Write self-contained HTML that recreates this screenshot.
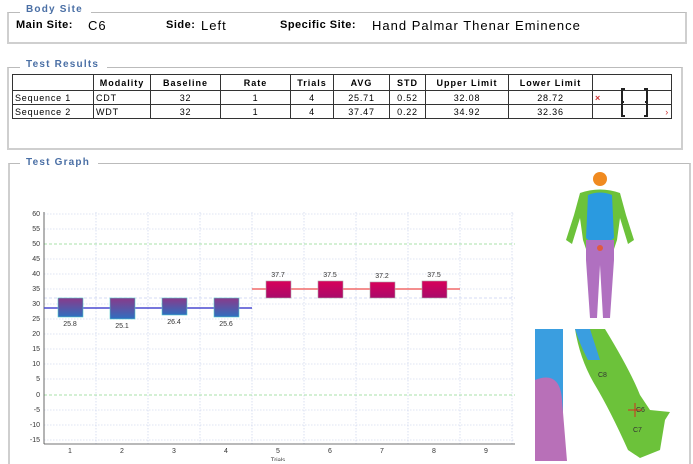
<!DOCTYPE html>
<html><head><style>
body{margin:0;width:693px;height:461px;background:#fff;font-family:"Liberation Sans",sans-serif;position:relative;overflow:hidden}
.box{position:absolute;border:2px solid #cfcfcf;border-top:1px solid #bbb}
.ttl{position:absolute;background:#fff;color:#4a6fa5;font-weight:bold;font-size:10px;letter-spacing:1.2px;padding:0 8px 0 6px}
.lbl{position:absolute;font-size:11px;font-weight:bold;letter-spacing:.5px}
.val{position:absolute;font-size:13px;letter-spacing:1px}
table{position:absolute;left:12px;top:74px;border-collapse:collapse;font-size:9px}
td{border:1px solid #333;height:13px;padding:0 2px;text-align:center;letter-spacing:.8px}
th{border:1px solid #333;height:13px;font-size:9px;letter-spacing:1px}
</style></head><body>
<div class="box" style="left:7px;top:12px;width:676px;height:29px"></div>
<div class="ttl" style="left:20px;top:4px">Body Site</div>
<div class="lbl" style="left:16px;top:19px">Main Site:</div><div class="val" style="left:88px;top:18px">C6</div>
<div class="lbl" style="left:166px;top:19px">Side:</div><div class="val" style="left:201px;top:18px">Left</div>
<div class="lbl" style="left:280px;top:19px">Specific Site:</div><div class="val" style="left:372px;top:18px">Hand Palmar Thenar Eminence</div>

<div class="box" style="left:7px;top:67px;width:672px;height:80px"></div>
<div class="ttl" style="left:20px;top:59px">Test Results</div>
<table>
<tr><th style="width:78px"></th><th style="width:54px">Modality</th><th style="width:67px">Baseline</th><th style="width:67px">Rate</th><th style="width:40px">Trials</th><th style="width:53px">AVG</th><th style="width:33px">STD</th><th style="width:80px">Upper Limit</th><th style="width:81px">Lower Limit</th><th style="width:76px"></th></tr>
<tr><td style="text-align:left">Sequence 1</td><td style="text-align:left">CDT</td><td>32</td><td>1</td><td>4</td><td>25.71</td><td>0.52</td><td>32.08</td><td>28.72</td><td style="text-align:left;color:#c33;font-weight:bold">×</td></tr>
<tr><td style="text-align:left">Sequence 2</td><td style="text-align:left">WDT</td><td>32</td><td>1</td><td>4</td><td>37.47</td><td>0.22</td><td>34.92</td><td>32.36</td><td style="text-align:right;color:#c33">›</td></tr>
</table>
<svg style="position:absolute;left:620px;top:88px" width="30" height="30"><path d="M5 1H2V28H5M24 1H27V28H24M2 14H4M27 14H25" stroke="#222" stroke-width="2" fill="none"/></svg>

<div style="position:absolute;left:8px;top:163px;width:679px;height:300px;border-left:2px solid #cfcfcf;border-top:1px solid #bbb;border-right:2px solid #cfcfcf"></div>
<div class="ttl" style="left:20px;top:157px">Test Graph</div>

<svg style="position:absolute;left:0;top:0" width="693" height="461" font-family="Liberation Sans" font-size="7" fill="#333">
<defs>
<linearGradient id="bl" x1="0" y1="0" x2="0" y2="1"><stop offset="0" stop-color="#8a3a8a"/><stop offset="1" stop-color="#2e6fc0"/></linearGradient>
<linearGradient id="rd" x1="0" y1="0" x2="0" y2="1"><stop offset="0" stop-color="#d8005a"/><stop offset="1" stop-color="#a80a6a"/></linearGradient>
</defs>
<g stroke="#c0cbe8" stroke-width=".6" stroke-dasharray="1.5,1.5">
<line x1="44" y1="214" x2="515" y2="214"/><line x1="44" y1="229" x2="515" y2="229"/><line x1="44" y1="259" x2="515" y2="259"/><line x1="44" y1="274" x2="515" y2="274"/><line x1="44" y1="289" x2="515" y2="289"/><line x1="44" y1="304" x2="515" y2="304"/><line x1="44" y1="319" x2="515" y2="319"/><line x1="44" y1="334" x2="515" y2="334"/><line x1="44" y1="349" x2="515" y2="349"/><line x1="44" y1="364" x2="515" y2="364"/><line x1="44" y1="379" x2="515" y2="379"/><line x1="44" y1="410" x2="515" y2="410"/><line x1="44" y1="425" x2="515" y2="425"/><line x1="44" y1="440" x2="515" y2="440"/>
<line x1="96" y1="212" x2="96" y2="444"/><line x1="148" y1="212" x2="148" y2="444"/><line x1="200" y1="212" x2="200" y2="444"/><line x1="252" y1="212" x2="252" y2="444"/><line x1="304" y1="212" x2="304" y2="444"/><line x1="356" y1="212" x2="356" y2="444"/><line x1="408" y1="212" x2="408" y2="444"/><line x1="460" y1="212" x2="460" y2="444"/><line x1="512" y1="212" x2="512" y2="444"/>
<line x1="44" y1="298" x2="515" y2="298" stroke="#aab8ee" stroke-dasharray="3,2"/>
</g>
<g stroke="#8fd88f" stroke-width=".8" stroke-dasharray="3,2"><line x1="44" y1="244" x2="515" y2="244"/><line x1="44" y1="395" x2="515" y2="395"/></g>
<g stroke="#444" stroke-width=".8"><line x1="44" y1="212" x2="44" y2="444"/><line x1="44" y1="444" x2="515" y2="444"/></g>
<g text-anchor="end">
<text x="40" y="216">60</text><text x="40" y="231">55</text><text x="40" y="246">50</text><text x="40" y="261">45</text><text x="40" y="276">40</text><text x="40" y="291">35</text><text x="40" y="306">30</text><text x="40" y="321">25</text><text x="40" y="336">20</text><text x="40" y="351">15</text><text x="40" y="366">10</text><text x="40" y="381">5</text><text x="40" y="397">0</text><text x="40" y="412">-5</text><text x="40" y="427">-10</text><text x="40" y="442">-15</text></g>
<g text-anchor="middle"><text x="70" y="453">1</text><text x="122" y="453">2</text><text x="174" y="453">3</text><text x="226" y="453">4</text><text x="278" y="453">5</text><text x="330" y="453">6</text><text x="382" y="453">7</text><text x="434" y="453">8</text><text x="486" y="453">9</text><text x="278" y="462" font-size="6">Trials</text></g>
<line x1="44" y1="308" x2="252" y2="308" stroke="#4a4ad0" stroke-width="1.5"/>
<line x1="252" y1="289" x2="460" y2="289" stroke="#f06a6a" stroke-width="1.5"/>
<g stroke="#5cc" stroke-width=".6">
<rect x="58" y="298" width="25" height="19" fill="url(#bl)"/><rect x="110" y="298" width="25" height="21" fill="url(#bl)"/><rect x="162" y="298" width="25" height="17" fill="url(#bl)"/><rect x="214" y="298" width="25" height="19" fill="url(#bl)"/></g>
<g stroke="#aaa" stroke-width=".6">
<rect x="266" y="281" width="25" height="17" fill="url(#rd)"/><rect x="318" y="281" width="25" height="17" fill="url(#rd)"/><rect x="370" y="282" width="25" height="16" fill="url(#rd)"/><rect x="422" y="281" width="25" height="17" fill="url(#rd)"/></g>
<g text-anchor="middle"><text x="70" y="326">25.8</text><text x="122" y="328">25.1</text><text x="174" y="324">26.4</text><text x="226" y="326">25.6</text>
<text x="278" y="277">37.7</text><text x="330" y="277">37.5</text><text x="382" y="278">37.2</text><text x="434" y="277">37.5</text></g>
<g>
<circle cx="600" cy="179" r="7" fill="#f08a20"/>
<path d="M580 193 Q600 186 620 193 L626 215 L634 240 L628 244 L620 218 L617 240 L612 255 L588 255 L583 240 L580 218 L572 244 L566 240 L574 215Z" fill="#6cc23a"/>
<path d="M588 195 Q600 190 612 195 L614 238 L600 250 L586 238Z" fill="#2a9ae0"/>
<path d="M586 240 L614 240 L614 260 L610 318 L603 318 L600 265 L597 318 L590 318 L586 260Z" fill="#b070c0"/>
<circle cx="600" cy="248" r="3" fill="#e05a40"/>
</g>
<rect x="535" y="329" width="28" height="132" fill="#3a9ee0"/>
<path d="M535 380 Q560 370 562 400 L567 461 L535 461Z" fill="#b870b8"/>
<path d="M575 329 L605 329 Q630 370 640 395 L650 410 L670 412 L665 420 L660 450 L640 458 L628 450 Q610 410 595 385 Q580 360 575 329Z" fill="#6cc23a"/>
<path d="M575 329 L590 329 L600 360 L588 360 Q580 345 575 329Z" fill="#3a9ee0"/>
<text x="598" y="377" font-size="7">C8</text><text x="636" y="412" font-size="7">C6</text><text x="633" y="432" font-size="7">C7</text>
<path d="M628 410h14M635 403v14" stroke="#d03020" stroke-width="1"/>
</svg>
</body></html>
